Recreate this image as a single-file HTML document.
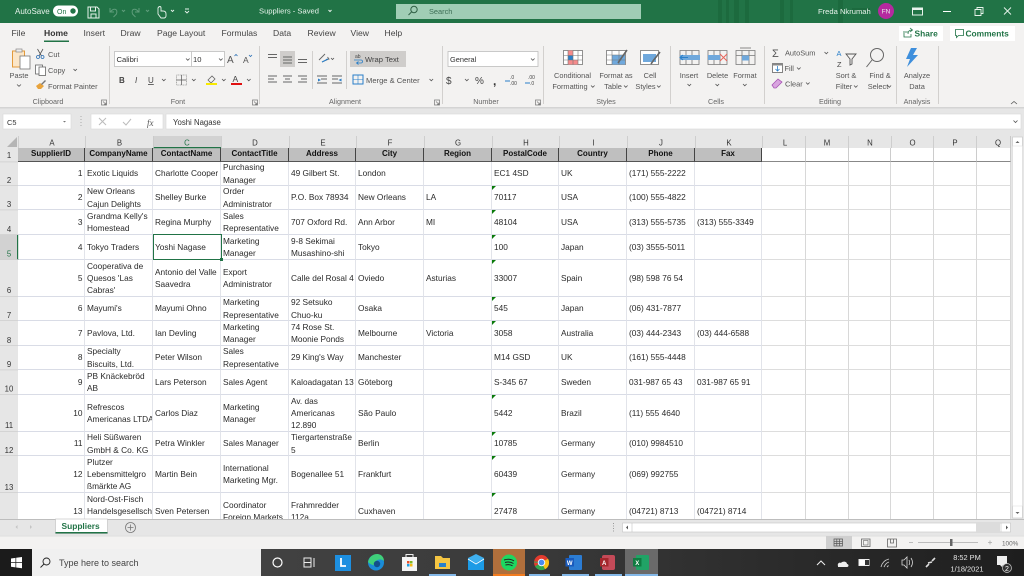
<!DOCTYPE html>
<html lang="en"><head><meta charset="utf-8"><title>Suppliers - Excel</title>
<style>
html,body{margin:0;padding:0;width:1024px;height:576px;overflow:hidden;background:#e6e6e6}
body{position:relative;font-family:"Liberation Sans",sans-serif}
#grid{position:absolute;left:18px;top:148px;width:993px;height:371px;overflow:hidden;background:#fff}
table{border-collapse:separate;border-spacing:0;table-layout:fixed;width:993px;font-size:8.3px;color:#2a2a2a;filter:blur(.25px)}
td{padding:0 2px;border-right:1px solid #e2e4ea;border-bottom:1px solid #d9dce6;line-height:12.3px;vertical-align:middle;overflow:hidden;box-sizing:border-box;white-space:nowrap}
td p{margin:-8px 0;padding:0}
tr.h td{background:#bfbfbf;color:#111;font-weight:bold;font-size:8px;text-align:center;border-right:1px solid #444;border-bottom:1px solid #555;padding:0}
tr.h td.n{background:#fff;border-bottom:1px solid #888;border-right:1px solid #ccc}
td.a{text-align:right;padding-right:1.5px}
td.g{position:relative}
td.g:before{content:"";position:absolute;left:0;top:0;border-top:4px solid #0a7a0a;border-right:4px solid transparent}
td.e{border-right-color:#d8d8d8;border-bottom-color:#ddd}
#sel{position:absolute;left:153px;top:234px;width:68.500px;height:26px;box-sizing:border-box;border:1px solid #217346;border-left:1.5px solid #217346}
#sel:after{content:"";position:absolute;right:-2px;bottom:-2px;width:3px;height:3px;background:#217346}
svg{position:absolute;left:0;top:0}
svg text{font-family:"Liberation Sans",sans-serif;font-size:7.6px;fill:#555}
.b{filter:blur(.25px)}
.c{text-anchor:middle}
.w{fill:#e8f3ec!important}
.tab{font-size:8.6px!important;fill:#444!important}
.gl{font-size:7.2px!important;fill:#666!important}
.col{font-size:7.8px!important;fill:#333!important}
</style></head><body>

<svg id="chrome" width="1024" height="576" viewBox="0 0 1024 576" style="z-index:1">
<rect x="0" y="0" width="1024" height="23" fill="#217346"/>
<g fill="#1c6a3e"><rect x="718" y="0" width="4" height="23"/><rect x="726" y="0" width="3" height="23"/><rect x="734" y="0" width="5" height="23"/><rect x="745" y="0" width="4" height="23"/><rect x="780" y="0" width="4" height="23"/><rect x="790" y="0" width="3" height="23"/><rect x="838" y="0" width="5" height="23"/><rect x="852" y="8" width="18" height="4"/></g>
<rect x="0" y="23" width="1024" height="84" fill="#f3f2f1"/>
<rect x="0" y="107" width="1024" height="29" fill="#e6e6e6"/>
<rect x="0" y="107" width="1024" height="1.5" fill="#d4d4d4"/>
<rect x="0" y="136" width="1024" height="12" fill="#e6e6e6"/>

<g class="b">
<text x="15" y="14" class="w" style="font-size:8px">AutoSave</text>
<rect x="53" y="5.500" width="25" height="11" rx="5.500" fill="#fff"/><text x="57" y="14" style="font-size:7px;fill:#217346">On</text><circle cx="73" cy="11" r="2.700" fill="#217346"/>
<g fill="none" stroke="#e8f3ec" stroke-width="1"><path d="M88 7h9l2 2v9H88z"/><path d="M90.500 7v4h5V7M91 18v-4h5v4"/></g>
<g fill="none" stroke="#5f9d7b" stroke-width="1"><path d="M110 8v4h4M110.500 12c2-4 8-4 6 2l-3 3"/><path d="M139 8v4h-4M138.500 12c-2-4-8-4-6 2l3 3"/><path d="M122 10l1.500 1.500 1.500-1.500M146 10l1.500 1.500 1.500-1.500"/></g>
<path d="M158 8c1-2 3-2 3 0v3h2c2 0 3 1 3 3v2c0 1-1 2-2 2h-3l-3-4zM171 10l1.500 1.500 1.500-1.500M185 9h4M185 11l2 2 2-2" fill="none" stroke="#e8f3ec" stroke-width=".9"/>
<text x="259" y="13.500" class="w" style="font-size:7.600px">Suppliers - Saved</text>
<path d="M328.500 10l1.500 1.500 1.500-1.500" stroke="#e8f3ec" fill="none"/>
<rect x="396" y="4" width="245" height="15" fill="#a0cdb5"/>
<circle cx="414" cy="9.500" r="3.200" fill="none" stroke="#2f5f44"/><path d="M411.500 12l-3 3" stroke="#2f5f44"/>
<text x="429" y="14" style="font-size:7.400px;fill:#3d6e55">Search</text>
<text x="818" y="14" class="w" style="font-size:7.600px">Freda Nkrumah</text>
<circle cx="886" cy="11" r="8" fill="#b5299f"/><text x="886" y="13.500" class="c w" style="font-size:6.400px">FN</text>
<rect x="912.500" y="8" width="10" height="7" fill="none" stroke="#e8f3ec"/><rect x="912.500" y="8" width="10" height="2" fill="#e8f3ec"/>
<rect x="943" y="11" width="8" height="1" fill="#fff"/>
<path d="M975 9.500h6v6h-6zM977 9.500v-2h6v6h-2" fill="none" stroke="#e8f3ec" stroke-width=".9"/>
<path d="M1004 7.500l7 7M1011 7.500l-7 7" stroke="#e8f3ec" stroke-width=".9"/>

<text x="11.500" y="36" class="tab">File</text><text x="44" y="36" class="tab" style="font-weight:bold;fill:#333!important">Home</text><text x="83.500" y="36" class="tab">Insert</text><text x="120.500" y="36" class="tab">Draw</text><text x="157" y="36" class="tab">Page Layout</text><text x="221.500" y="36" class="tab">Formulas</text><text x="273" y="36" class="tab">Data</text><text x="307.500" y="36" class="tab">Review</text><text x="350.500" y="36" class="tab">View</text><text x="384.500" y="36" class="tab">Help</text>
<rect x="44" y="40.500" width="25" height="1.500" fill="#217346"/>
<rect x="899" y="26" width="44" height="15" fill="#fff"/><rect x="950" y="26" width="65" height="15" fill="#fff"/>
<path d="M905 32h3M904 31v6h7v-3M908 34c0-3 2-4 4-4M910 28l2.500 2-2.500 2" fill="none" stroke="#217346" stroke-width=".8"/>
<text x="914.500" y="36.500" style="font-size:8.400px;fill:#217346;font-weight:bold">Share</text>
<path d="M955.500 29.500h8v6h-5l-2 2v-2h-1z" fill="none" stroke="#217346" stroke-width=".8"/>
<text x="965.500" y="36.500" style="font-size:8.400px;fill:#217346;font-weight:bold">Comments</text>

<g fill="#d2d0ce"><rect x="109" y="46" width="1" height="58"/><rect x="259" y="46" width="1" height="58"/><rect x="442" y="46" width="1" height="58"/><rect x="543" y="46" width="1" height="58"/><rect x="670" y="46" width="1" height="58"/><rect x="764" y="46" width="1" height="58"/><rect x="896" y="46" width="1" height="58"/><rect x="938" y="46" width="1" height="58"/><rect x="312" y="51" width="1" height="38"/><rect x="346" y="51" width="1" height="38"/></g>

<rect x="12.500" y="51" width="12" height="16" fill="#fbe6c8" stroke="#e39a3b"/><rect x="16" y="49" width="6" height="3" fill="#eee" stroke="#888" stroke-width=".7"/><rect x="20" y="56" width="10" height="13" fill="#fff" stroke="#777" stroke-width=".8"/>
<text x="19" y="78" class="c" style="font-size:7.400px">Paste</text><path d="M17 84.500l2 1.800 2-1.800" fill="none" stroke="#555" stroke-width=".8"/>
<path d="M37.500 49l4 7M43 49l-4 7" stroke="#555" stroke-width=".8"/><circle cx="38" cy="57" r="1.500" fill="none" stroke="#2a6fb5" stroke-width=".8"/><circle cx="42.500" cy="57" r="1.500" fill="none" stroke="#2a6fb5" stroke-width=".8"/>
<text x="48" y="57" style="font-size:7.400px">Cut</text>
<rect x="35.500" y="65" width="7" height="9" fill="#fff" stroke="#666" stroke-width=".8"/><rect x="39" y="67" width="6.500" height="8.500" fill="#fff" stroke="#666" stroke-width=".8"/>
<text x="48" y="73" style="font-size:7.400px">Copy</text><path d="M73.500 69l1.700 1.700 1.700-1.700" fill="none" stroke="#555" stroke-width=".8"/>
<path d="M36 86l4-3 4 3-3 3h-3z" fill="#e8a33c"/><path d="M41 84l4-4 1 1-4 4" fill="#777"/>
<text x="48" y="89" style="font-size:7.500px">Format Painter</text>
<text x="48" y="104" class="c gl">Clipboard</text><text x="178" y="104" class="c gl">Font</text><text x="345" y="104" class="c gl">Alignment</text><text x="486" y="104" class="c gl">Number</text><text x="606" y="104" class="c gl">Styles</text><text x="716" y="104" class="c gl">Cells</text><text x="830" y="104" class="c gl">Editing</text><text x="917" y="104" class="c gl">Analysis</text>
<g fill="none" stroke="#777" stroke-width=".7"><path d="M101.500 100h5v5h-5zM103 101.500l3 3M106 102.500v2h-2"/><path d="M252.500 100h5v5h-5zM254 101.500l3 3M257 102.500v2h-2"/><path d="M434.500 100h5v5h-5zM436 101.500l3 3M439 102.500v2h-2"/><path d="M535.500 100h5v5h-5zM537 101.500l3 3M540 102.500v2h-2"/></g>

<rect x="114.500" y="51.500" width="110" height="15" fill="#fff" stroke="#bdbdbd" stroke-width=".8"/><rect x="191" y="51.500" width=".8" height="15" fill="#bdbdbd"/>
<text x="116.500" y="62" style="font-size:7.600px;fill:#333">Calibri</text><text x="193" y="62" style="font-size:7.600px;fill:#333">10</text>
<path d="M186 58.500l1.800 1.800 1.800-1.800M219 58.500l1.800 1.800 1.800-1.800" fill="none" stroke="#555" stroke-width=".8"/>
<text x="227" y="63" style="font-size:10px;fill:#555">A</text><path d="M234.500 56l1.500-1.500 1.500 1.500" fill="none" stroke="#2a6fb5" stroke-width=".8"/>
<text x="243" y="63" style="font-size:8.500px;fill:#555">A</text><path d="M249 55l1.500 1.500 1.500-1.500" fill="none" stroke="#2a6fb5" stroke-width=".8"/>
<text x="119" y="83" style="font-size:8px;font-weight:bold;fill:#444">B</text><text x="135" y="83" style="font-size:8px;font-style:italic;fill:#444">I</text><text x="148" y="83" style="font-size:8px;fill:#444;text-decoration:underline">U</text>
<path d="M162 79l1.800 1.800 1.800-1.800M192 79l1.800 1.800 1.800-1.800M222 79l1.800 1.800 1.800-1.800M247 79l1.800 1.800 1.800-1.800" fill="none" stroke="#555" stroke-width=".8"/>
<rect x="176.500" y="75" width="10" height="10" fill="none" stroke="#999" stroke-width=".8" stroke-dasharray="1 .6"/><path d="M181.500 75v10M176.500 80h10" stroke="#555" stroke-width=".7"/>
<path d="M208 80l4-4 3 3-4 4z" fill="none" stroke="#666" stroke-width=".8"/><rect x="206" y="83" width="11" height="2" fill="#f7e900"/>
<text x="232.500" y="82" style="font-size:8.500px;fill:#444">A</text><rect x="231" y="83" width="11" height="2" fill="#e01010"/>

<rect x="280" y="51" width="15" height="16" fill="#cfcdcb"/><rect x="350" y="51" width="56" height="16" fill="#cfcdcb"/>
<g stroke="#666" stroke-width=".9"><path d="M268 54.500h9M268 57.500h9M283 57h9M283 60h9M283 63h9M298 59.500h9M298 62.500h9"/><path d="M268 76h9M268 79h6M268 82h9M283 76h9M285 79h5M283 82h9M298 76h9M301 79h6M298 82h9"/><path d="M317 76h10M321 79h6M317 83h10M332 76h10M332 79h6M332 83h10"/></g>
<path d="M318 78.500l3 1.500-3 1.500zM341.500 78.500l-3 1.500 3 1.500z" fill="#2a7fc9"/>
<path d="M319 60l6-6M322 62l7-3M327.500 57l1.500 2-3 .5" fill="none" stroke="#666" stroke-width=".9"/><path d="M322 62l6-3" stroke="#2a7fc9"/><path d="M331 58l1.500 1.500 1.500-1.500" fill="none" stroke="#555" stroke-width=".8"/>
<text x="355" y="58" style="font-size:5px;fill:#444">ab</text><path d="M354 60h7c2 0 2 3 0 3h-4M358.500 61.500l-2 1.500 2 1.500" fill="none" stroke="#2a7fc9" stroke-width=".8"/>
<text x="365" y="62" style="font-size:7.600px;fill:#444">Wrap Text</text>
<rect x="353" y="75" width="10" height="9" fill="none" stroke="#2a7fc9"/><path d="M353 79.500h10M358 75v9" stroke="#2a7fc9" stroke-width=".6"/>
<text x="366" y="83" style="font-size:7.600px">Merge &amp; Center</text><path d="M429.500 79l1.800 1.800 1.800-1.800" fill="none" stroke="#555" stroke-width=".8"/>

<rect x="448" y="51.500" width="90" height="15" fill="#fff" stroke="#bdbdbd" stroke-width=".8"/>
<text x="450" y="62" style="font-size:7.400px;fill:#333">General</text><path d="M531 58.500l1.800 1.800 1.800-1.800" fill="none" stroke="#555" stroke-width=".8"/>
<text x="446" y="84" style="font-size:10px;fill:#444">$</text><path d="M465 79l1.800 1.800 1.800-1.800" fill="none" stroke="#555" stroke-width=".8"/>
<text x="475" y="84" style="font-size:10px;fill:#444">%</text><text x="493" y="85" style="font-size:12px;font-weight:bold;fill:#333">,</text>
<text x="510" y="79" style="font-size:5px;fill:#444">.0</text><text x="510" y="85" style="font-size:5px;fill:#444">.00</text><path d="M505 81h5" stroke="#2a7fc9"/>
<text x="528" y="79" style="font-size:5px;fill:#444">.00</text><text x="530" y="85" style="font-size:5px;fill:#444">.0</text><path d="M525 83h5" stroke="#2a7fc9"/>

<rect x="563.500" y="50.500" width="19" height="14" fill="#fff" stroke="#777" stroke-width=".8"/><rect x="568" y="50.500" width="5" height="5" fill="#f58b8b"/><rect x="568" y="60" width="10" height="4.500" fill="#f58b8b"/><rect x="568" y="55.500" width="5" height="4.500" fill="#2a7fc9"/><path d="M568 50.500v14M573 50.500v14M578 50.500v14M563.500 55.500h19M563.500 60h19" stroke="#777" stroke-width=".6"/>
<rect x="606.500" y="50.500" width="19" height="14" fill="#fff" stroke="#777" stroke-width=".8"/><rect x="612" y="55" width="13" height="9.500" fill="#6fa8dc"/><path d="M612 50.500v14M619 50.500v14M606.500 55h19M606.500 60h19" stroke="#777" stroke-width=".6"/><path d="M627 50l-7 10-2 3" stroke="#666" stroke-width="1.600" fill="none"/>
<rect x="640.500" y="50.500" width="18" height="14" fill="#fff" stroke="#777" stroke-width=".8"/><rect x="643" y="54" width="13" height="8" fill="#6fa8dc"/><path d="M660 52l-7 9-2 3" stroke="#666" stroke-width="1.600" fill="none"/>
<text x="572.500" y="78" class="c" style="font-size:7.400px">Conditional</text><text x="570" y="89" class="c" style="font-size:7.400px">Formatting</text><text x="616" y="78" class="c" style="font-size:7.400px">Format as</text><text x="613" y="89" class="c" style="font-size:7.400px">Table</text><text x="650" y="78" class="c" style="font-size:7.400px">Cell</text><text x="645.500" y="89" class="c" style="font-size:7.400px">Styles</text>
<path d="M591 85.500l1.800 1.800 1.800-1.800M624 85.500l1.800 1.800 1.800-1.800M657 85.500l1.800 1.800 1.800-1.800" fill="none" stroke="#555" stroke-width=".8"/>

<g fill="none" stroke="#777" stroke-width=".8"><path d="M680 50.500h19v14h-19zM686 50.500v14M692 50.500v14"/><path d="M708 50.500h19v14h-19zM714 50.500v14M720 50.500v14"/><path d="M736 50.500h19v14h-19zM742 50.500v14M749 50.500v14M736 55.500h19"/></g>
<rect x="680" y="55" width="20" height="5" fill="#6fa8dc"/><path d="M680 57.500h8M683 55l-3 2.500 3 2.500" stroke="#2a7fc9" fill="none"/>
<rect x="708" y="55" width="12" height="5" fill="#6fa8dc"/><path d="M720 54l7 7M727 54l-7 7" stroke="#e8645a" stroke-width="1"/>
<rect x="742" y="55.500" width="7" height="5" fill="#6fa8dc"/><rect x="740" y="47.500" width="11" height="1" fill="#888"/>
<text x="689" y="78" class="c" style="font-size:7.400px">Insert</text><text x="717.500" y="78" class="c" style="font-size:7.400px">Delete</text><text x="745" y="78" class="c" style="font-size:7.400px">Format</text>
<path d="M687.500 84l1.800 1.800 1.800-1.800M715.500 84l1.800 1.800 1.800-1.800M743 84l1.800 1.800 1.800-1.800" fill="none" stroke="#555" stroke-width=".8"/>

<text x="772" y="57" style="font-size:11px;fill:#555">Σ</text><text x="785" y="55.500" style="font-size:7.400px">AutoSum</text><path d="M824.500 52l1.800 1.800 1.800-1.800" fill="none" stroke="#555" stroke-width=".8"/>
<rect x="772.500" y="63.500" width="10" height="9" fill="#fff" stroke="#666" stroke-width=".8"/><rect x="772.500" y="63.500" width="10" height="2" fill="#888"/><path d="M777.500 66v5M775.500 69l2 2 2-2" stroke="#2a7fc9" fill="none" stroke-width=".8"/>
<text x="784.500" y="71" style="font-size:7.400px">Fill</text><path d="M797 67.500l1.800 1.800 1.800-1.800" fill="none" stroke="#555" stroke-width=".8"/>
<path d="M772 85l6-6 4 3-6 6h-2z" fill="#d9a5e0" stroke="#a855b5" stroke-width=".8"/>
<text x="785" y="86.500" style="font-size:7.400px">Clear</text><path d="M806 82.500l1.800 1.800 1.800-1.800" fill="none" stroke="#555" stroke-width=".8"/>
<text x="836.500" y="56" style="font-size:7.400px;fill:#2a7fc9">A</text><text x="837" y="67" style="font-size:7.400px;fill:#444">Z</text>
<path d="M846 54h10l-4 5v5l-2 1v-6z" fill="none" stroke="#555" stroke-width=".9"/>
<circle cx="877" cy="55" r="6.500" fill="none" stroke="#666"/><path d="M872 60l-5.500 7" stroke="#666"/>
<text x="846" y="78" class="c" style="font-size:7.400px">Sort &amp;</text><text x="844" y="89" class="c" style="font-size:7.400px">Filter</text><path d="M854 85.500l1.800 1.800 1.800-1.800" fill="none" stroke="#555" stroke-width=".8"/>
<text x="880" y="78" class="c" style="font-size:7.400px">Find &amp;</text><text x="878" y="89" class="c" style="font-size:7.400px">Select</text><path d="M887.500 85.500l1.800 1.800 1.800-1.800" fill="none" stroke="#555" stroke-width=".8"/>
<path d="M917 48h-6l-5 11h4l-3 8 11-12h-5z" fill="#3f8fdc"/>
<text x="917" y="78" class="c" style="font-size:7.400px">Analyze</text><text x="917" y="89" class="c" style="font-size:7.400px">Data</text>
<path d="M1011 104l3-2.500 3 2.500" fill="none" stroke="#555" stroke-width=".8"/>

<rect x="3" y="114" width="68" height="15" fill="#fff" stroke="#d8d8d8" stroke-width=".6"/><text x="7" y="125" style="font-size:7.400px;fill:#333">C5</text><path d="M63 121l1.500 1.500 1.500-1.500" fill="#777"/>
<path d="M81 116v11" stroke="#aaa" stroke-dasharray="1 2"/>
<rect x="91" y="114" width="72" height="15" fill="#fff" stroke="#d8d8d8" stroke-width=".6"/>
<path d="M99 118l7 7M106 118l-7 7" stroke="#bbb"/><path d="M123 122l3 3 5-6" fill="none" stroke="#bbb"/>
<text x="147" y="126" style="font-size:9px;font-style:italic;font-family:'Liberation Serif',serif;fill:#555">fx</text>
<rect x="166" y="114" width="855" height="15" fill="#fff" stroke="#d8d8d8" stroke-width=".6"/><text x="173" y="125" style="font-size:7.800px;fill:#333">Yoshi Nagase</text><path d="M1013.500 120.500l2 2 2-2" fill="none" stroke="#555" stroke-width=".8"/>

<path d="M17 137v10H7z" fill="#b5b5b5"/>
<rect x="153" y="136" width="68" height="12" fill="#d2d2d2"/><rect x="153" y="147" width="68" height="1.200" fill="#217346"/>
<g fill="#c8c8c8"><rect x="18" y="136" width=".8" height="12"/><rect x="85" y="136" width=".8" height="12"/><rect x="153" y="136" width=".8" height="12"/><rect x="221" y="136" width=".8" height="12"/><rect x="289" y="136" width=".8" height="12"/><rect x="356" y="136" width=".8" height="12"/><rect x="424" y="136" width=".8" height="12"/><rect x="492" y="136" width=".8" height="12"/><rect x="559" y="136" width=".8" height="12"/><rect x="627" y="136" width=".8" height="12"/><rect x="695" y="136" width=".8" height="12"/><rect x="762" y="136" width=".8" height="12"/><rect x="805" y="136" width=".8" height="12"/><rect x="848" y="136" width=".8" height="12"/><rect x="891" y="136" width=".8" height="12"/><rect x="933" y="136" width=".8" height="12"/><rect x="976" y="136" width=".8" height="12"/><rect x="1010" y="136" width="1" height="12"/></g>
<text x="52" y="145.500" class="c col">A</text><text x="119.500" y="145.500" class="c col">B</text><text x="187" y="145.500" class="c col" style="fill:#217346!important">C</text><text x="255" y="145.500" class="c col">D</text><text x="323" y="145.500" class="c col">E</text><text x="390" y="145.500" class="c col">F</text><text x="458" y="145.500" class="c col">G</text><text x="526" y="145.500" class="c col">H</text><text x="593.500" y="145.500" class="c col">I</text><text x="661" y="145.500" class="c col">J</text><text x="729" y="145.500" class="c col">K</text><text x="785" y="145.500" class="c col">L</text><text x="827" y="145.500" class="c col">M</text><text x="870" y="145.500" class="c col">N</text><text x="912.500" y="145.500" class="c col">O</text><text x="955" y="145.500" class="c col">P</text><text x="998" y="145.500" class="c col">Q</text>

<rect x="0" y="235" width="18" height="25" fill="#d2d2d2"/><rect x="17" y="235" width="1.200" height="25" fill="#217346"/>
<g fill="#cfcfcf"><rect x="0" y="161.500" width="18" height=".8"/><rect x="0" y="185" width="18" height=".8"/><rect x="0" y="209.500" width="18" height=".8"/><rect x="0" y="234" width="18" height=".8"/><rect x="0" y="259" width="18" height=".8"/><rect x="0" y="296" width="18" height=".8"/><rect x="0" y="320" width="18" height=".8"/><rect x="0" y="345" width="18" height=".8"/><rect x="0" y="369.500" width="18" height=".8"/><rect x="0" y="394" width="18" height=".8"/><rect x="0" y="431" width="18" height=".8"/><rect x="0" y="455" width="18" height=".8"/><rect x="0" y="492" width="18" height=".8"/></g>
<text x="9" y="158" class="c col">1</text><text x="9" y="183" class="c col">2</text><text x="9" y="207" class="c col">3</text><text x="9" y="232" class="c col">4</text><text x="9" y="256.500" class="c col" style="fill:#217346!important">5</text><text x="9" y="293" class="c col">6</text><text x="9" y="318" class="c col">7</text><text x="9" y="343" class="c col">8</text><text x="9" y="367" class="c col">9</text><text x="9" y="391.500" class="c col">10</text><text x="9" y="428" class="c col">11</text><text x="9" y="453" class="c col">12</text><text x="9" y="490" class="c col">13</text>

<rect x="1012.500" y="137" width="10" height="381" fill="#fff" stroke="#c8c8c8" stroke-width=".7"/>
<rect x="1012.500" y="146" width="10" height="360" fill="#fff" stroke="#dcdcdc" stroke-width=".5"/>
<path d="M1015.500 143l2-2 2 2z" fill="#666"/><path d="M1015.500 512l2 2 2-2z" fill="#666"/>

<rect x="0" y="519" width="1024" height="17" fill="#e6e6e6"/><rect x="0" y="519" width="1024" height="1" fill="#bdbdbd"/>
<rect x="55.500" y="519" width="52" height="14.500" fill="#fff" stroke="#bdbdbd" stroke-width=".6"/><rect x="55.500" y="532" width="52" height="1.500" fill="#217346"/>
<text x="61.500" y="529" style="font-size:8.400px;font-weight:bold;fill:#217346">Suppliers</text>
<path d="M17.500 525l-2 2 2 2zM30 525l2 2-2 2z" fill="#c4c4c4"/>
<circle cx="130.500" cy="527.500" r="5" fill="none" stroke="#777" stroke-width=".8"/><path d="M127.500 527.500h6M130.500 524.500v6" stroke="#777" stroke-width=".8"/>
<path d="M613.500 523v9" stroke="#999" stroke-dasharray="1 1.500"/>
<rect x="622.500" y="523" width="388" height="9" fill="#fff" stroke="#c4c4c4" stroke-width=".6"/><rect x="976" y="523" width="24" height="9" fill="#dcdcdc"/><path d="M632 523v9M1001 523v9" stroke="#c4c4c4" stroke-width=".6"/>
<path d="M628 525.500l-2 2 2 2zM1006 525.500l2 2-2 2z" fill="#555"/>

<rect x="0" y="536" width="1024" height="13" fill="#f3f2f1"/><rect x="0" y="535.800" width="1024" height=".6" fill="#d8d8d8"/>
<rect x="826" y="536" width="26" height="13" fill="#cfcfcf"/>
<path d="M834 539h8.500v7H834zM836.800 539v7M839.600 539v7M834 541.300h8.500M834 543.600h8.500" fill="none" stroke="#555" stroke-width=".7"/>
<rect x="861.500" y="539" width="8.500" height="7.500" fill="none" stroke="#666" stroke-width=".8"/><rect x="863.500" y="540.500" width="4.500" height="4.500" fill="none" stroke="#666" stroke-width=".6"/>
<path d="M887.500 539h9v8h-9zM890.500 539v4h3v-4" fill="none" stroke="#666" stroke-width=".8"/>
<path d="M909 542.500h4M918 542.500h60M990 540.500v4M988 542.500h4" stroke="#aaa" stroke-width=".8"/><rect x="950" y="539" width="2.500" height="7" fill="#666"/>
<text x="1002" y="545.500" style="font-size:6.400px;fill:#666">100%</text>

<defs><linearGradient id="tb" x1="0" x2="1"><stop offset="0" stop-color="#4a4a4a"/><stop offset=".5" stop-color="#3a3a3a"/><stop offset="1" stop-color="#1e1e1e"/></linearGradient></defs>
<rect x="0" y="549" width="1024" height="27" fill="url(#tb)"/>
<rect x="0" y="549" width="32" height="27" fill="#1b1b1b"/>
<rect x="32" y="549" width="229" height="27" fill="#f0f0f0"/>
<path d="M11 558.500l4.500-.6v4.400H11zM16.200 557.800l5.800-.8v5.300h-5.800zM11 563h4.500v4.400l-4.500-.6zM16.200 563H22v5.300l-5.800-.8z" fill="#fff"/>
<circle cx="46.500" cy="561.500" r="3.500" fill="none" stroke="#222" stroke-width=".9"/><path d="M44 564l-3.500 3.500" stroke="#222" stroke-width=".9"/>
<text x="59" y="566" style="font-size:9px;fill:#444">Type here to search</text>
<circle cx="277.500" cy="562.500" r="4.500" fill="none" stroke="#fff" stroke-width="1.200"/>
<path d="M304 558h7v9h-7zM314 558v9M304 562.500h7" fill="none" stroke="#eee" stroke-width="1"/>
<rect x="335" y="555" width="16" height="16" fill="#1d8fe0"/><path d="M341 558v8h5" stroke="#fff" stroke-width="1.800" fill="none"/>
<circle cx="376" cy="562.500" r="8" fill="#1a8cd8"/><path d="M368 562c1-5 5-8 9-8 4 0 7 3 7 7-2-2-6-2-8 0-1 1-1 3 1 4-4 1-7-1-9-3z" fill="#3fd07a"/><circle cx="377" cy="564" r="3.200" fill="#12508c"/>
<rect x="402" y="557" width="15" height="14" fill="#f4f4f4"/><path d="M406 557v-2.500h7V557" fill="none" stroke="#eee"/><rect x="407" y="561" width="2.500" height="2.500" fill="#e8502a"/><rect x="410" y="561" width="2.500" height="2.500" fill="#7db71f"/><rect x="407" y="564" width="2.500" height="2.500" fill="#1da1e6"/><rect x="410" y="564" width="2.500" height="2.500" fill="#f6b913"/>
<path d="M435 556h6l2 2h7v11h-15z" fill="#f5c542"/><rect x="439" y="563" width="7" height="4" fill="#2a7fc9"/>
<rect x="468" y="558" width="16" height="12" fill="#1c9be6"/><path d="M468 558l8 -4 8 4-8 5z" fill="#3fb0ef"/><path d="M468 559l8 5 8-5" stroke="#fff" fill="none" stroke-width=".8"/>
<rect x="493" y="549" width="32" height="27" fill="#b06f3c"/><rect x="493" y="574" width="32" height="2" fill="#f27b1e"/>
<circle cx="509" cy="562.500" r="8" fill="#1ed760"/><path d="M504 560c3-1 7-1 10 1M505 562.500c3-.8 6-.5 8.500 1M505.500 565c2-.5 5-.5 7 .8" stroke="#222" fill="none" stroke-width="1"/>
<circle cx="541.500" cy="562.500" r="7.500" fill="#e33b2e"/><path d="M541.500 562.500l6.500-3.700a7.500 7.500 0 0 1-3 10.500z" fill="#fbc116"/><path d="M541.500 562.500l3.500 6.800a7.500 7.500 0 0 1-10-3z" fill="#2fa84f"/><path d="M534 562l7.500.5" stroke="#2fa84f"/><circle cx="541.500" cy="562.500" r="3.300" fill="#4a8cf0" stroke="#fff" stroke-width=".9"/>
<rect x="569" y="555" width="13" height="15" rx="1" fill="#2b7cd3"/><rect x="565.500" y="558" width="8.500" height="8.500" fill="#185abd"/><text x="569.700" y="565" class="c" style="font-size:6px;fill:#fff;font-weight:bold">W</text>
<rect x="602" y="555" width="13" height="15" rx="2" fill="#c44a58"/><rect x="600" y="558" width="8.500" height="8.500" fill="#a4262c"/><text x="604.200" y="565" class="c" style="font-size:6px;fill:#fff;font-weight:bold">A</text>
<rect x="625" y="549" width="33" height="27" fill="#6a6a6a"/>
<rect x="636" y="555" width="13" height="15" rx="1" fill="#21a366"/><rect x="633" y="558" width="8.500" height="8.500" fill="#107c41"/><text x="637.200" y="565" class="c" style="font-size:6px;fill:#fff;font-weight:bold">X</text>
<g fill="#84b8e8"><rect x="529" y="574" width="21" height="2"/><rect x="562" y="574" width="27" height="2"/><rect x="595" y="574" width="27" height="2"/><rect x="625" y="574" width="33" height="2"/><rect x="429" y="574" width="27" height="2"/></g>
<path d="M817 565l4-4 4 4" fill="none" stroke="#eee"/>
<path d="M838 566c-1-3 2-4 3-3 1-2 6-2 6 1 2 0 2 3 0 3h-9z" fill="#eee"/>
<rect x="859" y="559.500" width="10" height="6" fill="#fff" stroke="#eee"/><rect x="865" y="560" width="4" height="5" fill="#333"/>
<path d="M881 567c1-4 4-7 8-8M884 567c1-2 2-4 5-5M887 567l1.500-1.500" fill="none" stroke="#ccc" stroke-width=".9"/>
<path d="M902 560h2l3-3v11l-3-3h-2zM909 560c1 2 1 3 0 5M911 558c2 3 2 6 0 9" fill="none" stroke="#ddd" stroke-width=".8"/>
<path d="M926 567l3-3M932 561l3-3M928 563l4-1" stroke="#ddd" stroke-width="1.600"/>
<text x="967" y="560" class="c" style="font-size:7.400px;fill:#e6e6e6">8:52 PM</text><text x="967" y="571.500" class="c" style="font-size:7.400px;fill:#e6e6e6">1/18/2021</text>
<path d="M997 556h10v9h-4l-1 2-2-2h-3z" fill="#eee"/><circle cx="1007" cy="568" r="4.500" fill="#333" stroke="#ccc" stroke-width=".7"/><text x="1007" y="571" class="c" style="font-size:7px;fill:#fff">2</text>
</g>
</svg>

<div id="grid" style="z-index:0"><table>
<colgroup><col style="width:67px"><col style="width:68px"><col style="width:68px"><col style="width:68px"><col style="width:67px"><col style="width:68px"><col style="width:68px"><col style="width:67px"><col style="width:68px"><col style="width:68px"><col style="width:67px"><col style="width:43.500px"><col style="width:43px"><col style="width:42.500px"><col style="width:42.500px"><col style="width:43px"><col style="width:34.500px"></colgroup>
<tr class="h" style="height:14px"><td>SupplierID</td><td>CompanyName</td><td>ContactName</td><td>ContactTitle</td><td>Address</td><td>City</td><td>Region</td><td>PostalCode</td><td>Country</td><td>Phone</td><td>Fax</td><td class="n"></td><td class="n"></td><td class="n"></td><td class="n"></td><td class="n"></td><td class="n"></td></tr>
<tr style="height:24px"><td class="a">1</td><td>Exotic Liquids</td><td>Charlotte Cooper</td><td><p>Purchasing<br>Manager</p></td><td>49 Gilbert St.</td><td>London</td><td></td><td>EC1 4SD</td><td>UK</td><td>(171) 555-2222</td><td></td><td class="e"></td><td class="e"></td><td class="e"></td><td class="e"></td><td class="e"></td><td class="e"></td></tr>
<tr style="height:24px"><td class="a">2</td><td><p>New Orleans<br>Cajun Delights</p></td><td>Shelley Burke</td><td><p>Order<br>Administrator</p></td><td>P.O. Box 78934</td><td>New Orleans</td><td>LA</td><td class="g">70117</td><td>USA</td><td>(100) 555-4822</td><td></td><td class="e"></td><td class="e"></td><td class="e"></td><td class="e"></td><td class="e"></td><td class="e"></td></tr>
<tr style="height:25px"><td class="a">3</td><td><p>Grandma Kelly's<br>Homestead</p></td><td>Regina Murphy</td><td><p>Sales<br>Representative</p></td><td>707 Oxford Rd.</td><td>Ann Arbor</td><td>MI</td><td class="g">48104</td><td>USA</td><td>(313) 555-5735</td><td>(313) 555-3349</td><td class="e"></td><td class="e"></td><td class="e"></td><td class="e"></td><td class="e"></td><td class="e"></td></tr>
<tr style="height:25px"><td class="a">4</td><td>Tokyo Traders</td><td>Yoshi Nagase</td><td><p>Marketing<br>Manager</p></td><td><p>9-8 Sekimai<br>Musashino-shi</p></td><td>Tokyo</td><td></td><td class="g">100</td><td>Japan</td><td>(03) 3555-5011</td><td></td><td class="e"></td><td class="e"></td><td class="e"></td><td class="e"></td><td class="e"></td><td class="e"></td></tr>
<tr style="height:37px"><td class="a">5</td><td><p>Cooperativa de<br>Quesos 'Las<br>Cabras'</p></td><td><p>Antonio del Valle<br>Saavedra</p></td><td><p>Export<br>Administrator</p></td><td>Calle del Rosal 4</td><td>Oviedo</td><td>Asturias</td><td class="g">33007</td><td>Spain</td><td>(98) 598 76 54</td><td></td><td class="e"></td><td class="e"></td><td class="e"></td><td class="e"></td><td class="e"></td><td class="e"></td></tr>
<tr style="height:24px"><td class="a">6</td><td>Mayumi's</td><td>Mayumi Ohno</td><td><p>Marketing<br>Representative</p></td><td><p>92 Setsuko<br>Chuo-ku</p></td><td>Osaka</td><td></td><td class="g">545</td><td>Japan</td><td>(06) 431-7877</td><td></td><td class="e"></td><td class="e"></td><td class="e"></td><td class="e"></td><td class="e"></td><td class="e"></td></tr>
<tr style="height:25px"><td class="a">7</td><td>Pavlova, Ltd.</td><td>Ian Devling</td><td><p>Marketing<br>Manager</p></td><td><p>74 Rose St.<br>Moonie Ponds</p></td><td>Melbourne</td><td>Victoria</td><td class="g">3058</td><td>Australia</td><td>(03) 444-2343</td><td>(03) 444-6588</td><td class="e"></td><td class="e"></td><td class="e"></td><td class="e"></td><td class="e"></td><td class="e"></td></tr>
<tr style="height:24px"><td class="a">8</td><td><p>Specialty<br>Biscuits, Ltd.</p></td><td>Peter Wilson</td><td><p>Sales<br>Representative</p></td><td>29 King's Way</td><td>Manchester</td><td></td><td>M14 GSD</td><td>UK</td><td>(161) 555-4448</td><td></td><td class="e"></td><td class="e"></td><td class="e"></td><td class="e"></td><td class="e"></td><td class="e"></td></tr>
<tr style="height:25px"><td class="a">9</td><td><p>PB Knäckebröd<br>AB</p></td><td>Lars Peterson</td><td>Sales Agent</td><td>Kaloadagatan 13</td><td>Göteborg</td><td></td><td>S-345 67</td><td>Sweden</td><td>031-987 65 43</td><td>031-987 65 91</td><td class="e"></td><td class="e"></td><td class="e"></td><td class="e"></td><td class="e"></td><td class="e"></td></tr>
<tr style="height:37px"><td class="a">10</td><td><p>Refrescos<br>Americanas LTDA</p></td><td>Carlos Diaz</td><td><p>Marketing<br>Manager</p></td><td><p>Av. das<br>Americanas<br>12.890</p></td><td>São Paulo</td><td></td><td class="g">5442</td><td>Brazil</td><td>(11) 555 4640</td><td></td><td class="e"></td><td class="e"></td><td class="e"></td><td class="e"></td><td class="e"></td><td class="e"></td></tr>
<tr style="height:24px"><td class="a">11</td><td><p>Heli Süßwaren<br>GmbH &amp; Co. KG</p></td><td>Petra Winkler</td><td>Sales Manager</td><td><p>Tiergartenstraße<br>5</p></td><td>Berlin</td><td></td><td class="g">10785</td><td>Germany</td><td>(010) 9984510</td><td></td><td class="e"></td><td class="e"></td><td class="e"></td><td class="e"></td><td class="e"></td><td class="e"></td></tr>
<tr style="height:37px"><td class="a">12</td><td><p>Plutzer<br>Lebensmittelgro<br>ßmärkte AG</p></td><td>Martin Bein</td><td><p>International<br>Marketing Mgr.</p></td><td>Bogenallee 51</td><td>Frankfurt</td><td></td><td class="g">60439</td><td>Germany</td><td>(069) 992755</td><td></td><td class="e"></td><td class="e"></td><td class="e"></td><td class="e"></td><td class="e"></td><td class="e"></td></tr>
<tr style="height:37px"><td class="a">13</td><td><p>Nord-Ost-Fisch<br>Handelsgesellsch<br>aft mbH</p></td><td>Sven Petersen</td><td><p>Coordinator<br>Foreign Markets</p></td><td><p>Frahmredder<br>112a</p></td><td>Cuxhaven</td><td></td><td class="g">27478</td><td>Germany</td><td>(04721) 8713</td><td>(04721) 8714</td><td class="e"></td><td class="e"></td><td class="e"></td><td class="e"></td><td class="e"></td><td class="e"></td></tr>
</table></div>
<div id="sel" style="z-index:2"></div>
</body></html>
